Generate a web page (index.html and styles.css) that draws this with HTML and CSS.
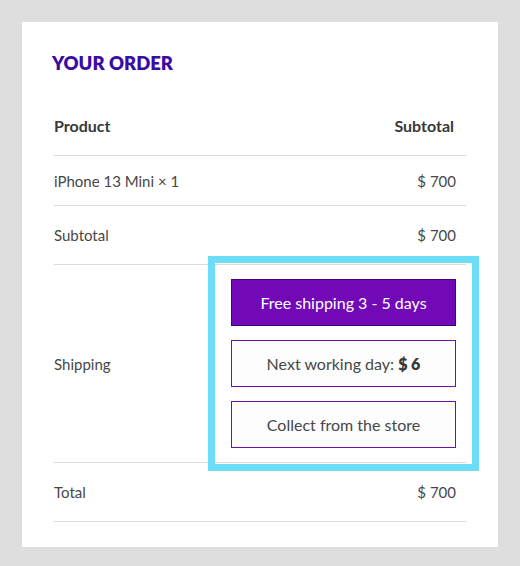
FILE: index.html
```html
<!DOCTYPE html>
<html lang="en">
<head>
<meta charset="utf-8">
<title>Your order</title>
<link rel="stylesheet" href="styles.css">
</head>
<body>
<section class="card">
  <h2 class="title">YOUR ORDER</h2>
  <div class="order">
    <div class="row head">
      <div class="cell">Product</div>
      <div class="cell right">Subtotal</div>
    </div>
    <div class="row item">
      <div class="cell">iPhone 13 Mini × 1</div>
      <div class="cell right">$ 700</div>
    </div>
    <div class="row sum">
      <div class="cell">Subtotal</div>
      <div class="cell right">$ 700</div>
    </div>
    <div class="row ship">
      <div class="cell label">Shipping</div>
      <div class="cell options-cell">
        <div class="options">
          <button class="opt selected" type="button">Free shipping 3 - 5 days</button>
          <button class="opt" type="button">Next working day: <b>$ 6</b></button>
          <button class="opt" type="button">Collect from the store</button>
        </div>
      </div>
    </div>
    <div class="row sum">
      <div class="cell">Total</div>
      <div class="cell right">$ 700</div>
    </div>
  </div>
</section>
</body>
</html>
```
FILE: styles.css
```css
* { box-sizing: border-box; }
html, body { margin: 0; }
body {
  background: #dedede;
  padding: 22px;
  font-family: Lato, "Liberation Sans", sans-serif;
  color: #474747;
  font-size: 15px;
  line-height: 18px;
}
.card {
  background: #fff;
  padding: 30px 32px 25px 32px;
}
.title {
  margin: 0 0 26px -2px;
  font-size: 18.5px;
  line-height: 23px;
  font-weight: 800;
  color: #3a0ca3;
}
.row {
  display: grid;
  grid-template-columns: 1fr 245px;
  border-bottom: 1px solid #dcdcdc;
}
.cell.right { text-align: right; padding-right: 10px; }
.head { font-weight: 700; color: #383838; font-size: 16px; }
.head .cell { padding-top: 16px; padding-bottom: 20px; }
.head .cell.right { padding-right: 12px; }
.item .cell { padding-top: 16px; padding-bottom: 15px; }
.sum .cell { padding-top: 20px; padding-bottom: 20px; }
.ship .label { align-self: center; }
.options-cell { padding: 14px 10px 14px 10px; }
.options {
  display: flex;
  flex-direction: column;
  gap: 14px;
  outline: 7px solid #6cdcf7;
  outline-offset: 16px;
}
.opt {
  height: 47px;
  font: inherit;
  font-size: 16px;
  color: #474747;
  background: #fdfdfd;
  border: 1px solid #6d0fa8;
  padding: 0;
  text-align: center;
}
.opt b { font-weight: 800; color: #383838; }
.opt.selected {
  background: #7209b7;
  border-color: #3d0a6e;
  color: #fff;
}
```
